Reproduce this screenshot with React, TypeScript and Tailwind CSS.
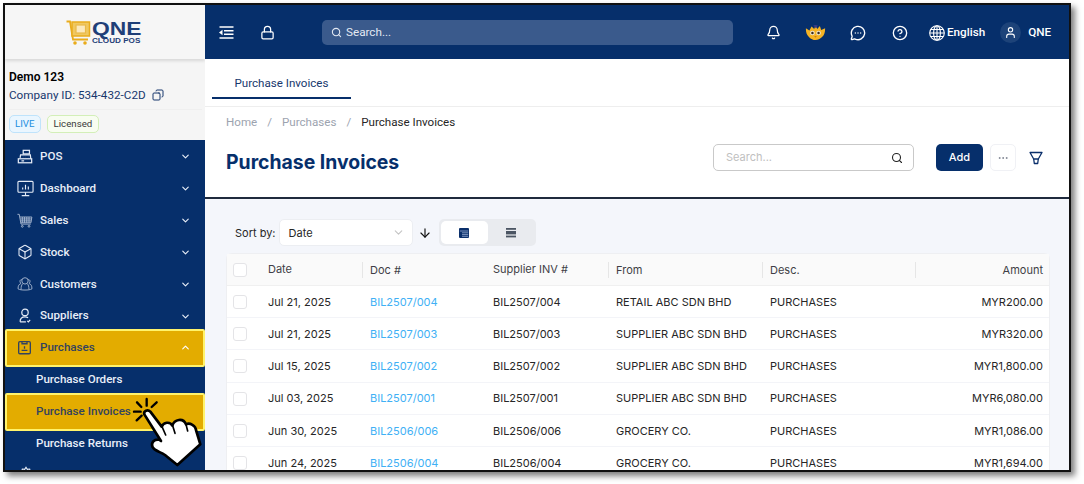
import React from "react";
import {
  Lock,
  Search,
  Bell,
  MessageCircleMore,
  CircleHelp,
  User,
  Copy,
  ChevronDown,
  ChevronUp,
  Box,
  ArrowDown,
  Ellipsis,
} from "lucide-react";

const PosIcon = () => (
  <svg width="16" height="16" viewBox="0 0 18 18" fill="none" stroke="currentColor" strokeWidth="1.4">
    <rect x="7" y="1.5" width="7" height="4" />
    <path d="M3.5 10 L4 6.5 H15 L15.5 11" />
    <rect x="1.5" y="11" width="15" height="4.5" />
    <path d="M5 13.3h3M7 9h.1M10 9h.1M13 9h.1" />
  </svg>
);

const DashIcon = () => (
  <svg width="17" height="17" viewBox="0 0 18 18" fill="none" stroke="currentColor" strokeWidth="1.2">
    <rect x="1" y="1.5" width="16" height="11.5" rx="1" />
    <path d="M9 13v3M5 16.5h8M6 10V8M9 10V5M12 10V7" />
  </svg>
);

const CartIcon = () => (
  <svg width="16" height="16" viewBox="0 0 18 18" fill="none" stroke="currentColor" strokeWidth="1" className="opacity-75">
    <path d="M0.5 1.5h2l2 11h11" />
    <path d="M3.2 4.5h13.5l-1 6.5H4.3" />
    <path d="M6 4.5v6.5M8.5 4.5v6.5M11 4.5v6.5M13.5 4.5v6.5M3.6 6.7h12.800M4 8.9h12" />
    <circle cx="6" cy="15" r="1" />
    <circle cx="13.5" cy="15" r="1" />
  </svg>
);

const UsersIcon = () => (
  <svg width="16" height="16" viewBox="0 0 18 18" fill="none" stroke="currentColor" strokeWidth="1" className="opacity-75">
    <circle cx="9" cy="5.5" r="3.6" />
    <path d="M5.6 4.2C3 3.6 2.600 7 4.600 8.400 2.400 9 1 11 1.200 14.500c2 1 4.500 1.300 7.800 1.300s5.800-.3 7.800-1.300C17 11 15.600 9 13.400 8.400c2-1.400 1.600-4.800-1-4.200" />
    <path d="M6.500 8.800C5 10 4.500 12 4.600 15.200M11.500 8.800c1.500 1.200 2 3.200 1.900 6.400" />
  </svg>
);

const SupplierIcon = () => (
  <svg width="16" height="16" viewBox="0 0 18 18" fill="none" stroke="currentColor" strokeWidth="1.4">
    <circle cx="9" cy="5" r="3.6" />
    <path d="M3.500 15.500c0-3.500 2-5.500 5.500-5.500 1.500 0 2.500.4 3.500 1M3.500 15.500h6.500M11.500 14.500l1.300 1.200 2-2.300" />
  </svg>
);

const PurchaseIcon = () => (
  <svg width="15" height="15" viewBox="0 0 18 18" fill="none" stroke="currentColor" strokeWidth="1.6">
    <rect x="2" y="2" width="14" height="14.500" rx="1.500" />
    <path d="M6 1.500v3h6v-3" />
    <path d="M5.500 12.500h7M9 7.500v3" />
  </svg>
);

const GearIcon = () => (
  <svg width="16" height="16" viewBox="0 0 24 24" fill="none" stroke="currentColor" strokeWidth="1.6">
    <circle cx="12" cy="12" r="3" />
    <path d="M12 2l2 3 3.500-.5.900 3.500L22 10l-2 2 2 2-3.600 2-.9 3.500-3.500-.5-2 3-2-3-3.500.5-.9-3.500L2 14l2-2-2-2 3.600-2 .9-3.500 3.500.5z" />
  </svg>
);

const MenuIcon = () => (
  <svg width="15" height="13" viewBox="0 0 15 13" fill="none" stroke="currentColor" strokeWidth="1.5" className="ml-[14px]">
    <path d="M0.500 1h14M5 4.700h9.500M5 8.300h9.500M0.500 12h14" />
    <path d="M3.500 3.800v5.400L0 6.500z" fill="currentColor" stroke="none" />
  </svg>
);

const GlobeIcon = () => (
  <svg width="16" height="16" viewBox="0 0 16 16" fill="none" stroke="currentColor" strokeWidth="1.1" className="ml-[21px]">
    <circle cx="8" cy="8" r="7.300" />
    <ellipse cx="8" cy="8" rx="3.400" ry="7.300" />
    <path d="M8 .7v14.600M.7 8h14.600M1.700 4.500h12.600M1.700 11.500h12.600" />
  </svg>
);

const CartLogo = () => (
  <svg width="25" height="26" viewBox="0 0 25 26" fill="none">
    <path d="M0.500 1.500h3.500l3 18h15" stroke="#e9ac1c" strokeWidth="1.800" />
    <rect x="6" y="2" width="17.500" height="14" fill="#f0c860" stroke="#e9ac1c" strokeWidth="1.500" />
    <rect x="10" y="5" width="9.500" height="8" fill="#fbe9bd" stroke="#e9b94a" strokeWidth="1.200" />
    <circle cx="9" cy="23" r="1.800" fill="#e9ac1c" />
    <circle cx="19" cy="23" r="1.800" fill="#e9ac1c" />
  </svg>
);

const Mascot = () => (
  <svg width="21" height="18" viewBox="0 0 24 20">
    <path d="M1 4.500l4 2.500L7.500 2.500 10.500 5.500 12 1.500 14 5.500 17 2 18.500 6.500 23 4.500c0 5-1 8-3.500 10S15 18 12 18s-5-1-7.500-3.500S1 9.500 1 4.500z" fill="#f5b324" />
    <path d="M9.500 1h5l-2 3.500z" fill="#3f3a8c" />
    <circle cx="8.500" cy="10" r="2.700" fill="#efe6cf" />
    <circle cx="15.500" cy="10" r="2.700" fill="#efe6cf" />
    <circle cx="8.500" cy="10" r="1.400" fill="#3b2a1a" />
    <circle cx="15.500" cy="10" r="1.400" fill="#3b2a1a" />
    <path d="M10.500 13.500h3l-1.500 2z" fill="#c97a14" />
  </svg>
);

const TableIcon = () => (
  <svg width="10" height="10" viewBox="0 0 10 10">
    <rect width="10" height="10" rx="1" fill="#0a2f6b" />
    <path d="M.8 3h8.400M3 4.800h6.200M3 6.600h6.200M3 8.300h6.200" stroke="#a9bce0" strokeWidth="0.700" />
  </svg>
);

const RowsIcon = () => (
  <svg width="10" height="10" viewBox="0 0 10 10" fill="#4b5563">
    <rect width="10" height="1.800" y="0" />
    <rect width="10" height="3.400" y="3" />
    <rect width="10" height="1.800" y="7.600" />
  </svg>
);

const FunnelIcon = () => (
  <svg width="14" height="14" viewBox="0 0 14 14" fill="none" stroke="#0a2f6b" strokeWidth="1.300" strokeLinejoin="round">
    <path d="M1 1.500h12L9.300 8H4.700z" />
    <path d="M4.700 8l.6 4.500h3.400L9.300 8" />
  </svg>
);

// coordinates follow a 3x crop of the hand
const HandCursor = () => (
  <svg width="85" height="75" viewBox="0 0 255 225" className="absolute left-[120px] top-[390px]">
    <g stroke="#000" strokeWidth="7" strokeLinecap="round">
      <path d="M65 12V32M95 22L80 36M36 22L49 36M27 50H47M35 76L50 62" />
    </g>
    <path
      d="M58 58C55 48 68 42 76 50L110 95C115 82 135 78 142 92C148 72 175 68 183 88C195 82 212 92 213 105L226 148L157 210L120 180C105 170 88 168 82 155C78 142 88 132 102 134L108 138Z"
      fill="#fff"
      stroke="#000"
      strokeWidth="8"
      strokeLinejoin="round"
    />
    <path d="M112 97L122 120M143 92L150 115M183 88L188 108" fill="none" stroke="#000" strokeWidth="5" strokeLinecap="round" />
  </svg>
);

const navItems = [
  { label: "POS", icon: <PosIcon /> },
  { label: "Dashboard", icon: <DashIcon /> },
  { label: "Sales", icon: <CartIcon /> },
  { label: "Stock", icon: <Box size={16} strokeWidth={1.6} /> },
  { label: "Customers", icon: <UsersIcon /> },
  { label: "Suppliers", icon: <SupplierIcon /> },
];

const rows = [
  ["Jul 21, 2025", "BIL2507/004", "BIL2507/004", "RETAIL ABC SDN BHD", "MYR200.00"],
  ["Jul 21, 2025", "BIL2507/003", "BIL2507/003", "SUPPLIER ABC SDN BHD", "MYR320.00"],
  ["Jul 15, 2025", "BIL2507/002", "BIL2507/002", "SUPPLIER ABC SDN BHD", "MYR1,800.00"],
  ["Jul 03, 2025", "BIL2507/001", "BIL2507/001", "SUPPLIER ABC SDN BHD", "MYR6,080.00"],
  ["Jun 30, 2025", "BIL2506/006", "BIL2506/006", "GROCERY CO.", "MYR1,086.00"],
  ["Jun 24, 2025", "BIL2506/004", "BIL2506/004", "GROCERY CO.", "MYR1,694.00"],
];

const Checkbox = () => <div className="w-[14px] h-[14px] rounded-[3px] border border-[#e4e4e7] bg-white" />;

const Highlight = () => (
  <div className="absolute inset-x-0 -inset-y-[3px] rounded-[2px] bg-[#e3ac00] border-[2.5px] border-[#fff36b]" />
);

const Sidebar = () => (
  <aside className="w-[200px] shrink-0 flex flex-col bg-[#f5f5f5] font-['Roboto',sans-serif]">
    <div className="h-[54px] shrink-0 flex items-center justify-center gap-[1px] pr-[2px] pt-[2px] bg-[#f6f6f6] shadow-[0_2px_3px_rgba(0,0,0,0.12)]">
      <CartLogo />
      <div className="w-[50px] flex flex-col font-['Liberation_Sans',sans-serif] text-[#1f3f78]">
        <span className="text-[18px] font-bold scale-x-[1.27] origin-left leading-[15px] h-[15px]">QNE</span>
        <span className="text-[6.5px] font-bold scale-x-[1.25] origin-left leading-[7px] h-[7px] whitespace-nowrap">CLOUD POS</span>
      </div>
    </div>
    <div className="h-[81px] shrink-0 pl-[4px] pr-[3px] pt-[10px]">
      <div className="text-[12px] font-semibold text-black leading-[16px]">Demo 123</div>
      <div className="mt-[1px] flex items-center gap-[6px] text-[11.7px] leading-[18px] text-[#17376d] pb-[5px] border-b border-[#efefef]">
        <span>Company ID: 534-432-C2D</span>
        <Copy size={12} className="-scale-x-100" />
      </div>
      <div className="mt-[5px] flex gap-[6px] text-[9.7px] leading-[16px]">
        <span className="px-[5px] rounded-[5px] border border-[#bfe3fb] bg-[#eaf6ff] text-[#1b8fe0]">LIVE</span>
        <span className="px-[6px] rounded-[5px] border border-[#d3efb8] bg-[#f8fdf1] text-[#3a3a3a]">Licensed</span>
      </div>
    </div>
    <nav className="flex-1 pt-[1px] bg-[#062f6b] text-[#e8eef8] text-[11.6px] font-medium overflow-hidden">
      {navItems.map((item) => (
        <div key={item.label} className="h-[31.85px] flex items-center pl-[12px] pr-[14px]">
          <span className="w-[23px] flex justify-start text-[#e4ebf6]">{item.icon}</span>
          <span className="flex-1">{item.label}</span>
          <ChevronDown size={11} strokeWidth={2.5} />
        </div>
      ))}
      <div className="relative h-[31.85px] flex items-center pl-[12px] pr-[14px] text-[#33435f]">
        <Highlight />
        <span className="relative w-[23px] flex justify-start"><PurchaseIcon /></span>
        <span className="relative flex-1">Purchases</span>
        <ChevronUp size={11} strokeWidth={2.5} className="relative text-white" />
      </div>
      <div className="h-[31.85px] flex items-center pl-[31px]">Purchase Orders</div>
      <div className="relative h-[31.85px] flex items-center pl-[31px] text-[#33435f]">
        <Highlight />
        <span className="relative">Purchase Invoices</span>
      </div>
      <div className="h-[31.85px] flex items-center pl-[31px]">Purchase Returns</div>
      <div className="h-[31.85px] pl-[13px] pt-[7px]"><GearIcon /></div>
    </nav>
  </aside>
);

const TopBar = () => (
  <header className="h-[54px] shrink-0 flex items-center pt-[1px] bg-[#062f6b] text-white font-['Roboto',sans-serif]">
    <MenuIcon />
    <Lock size={15} strokeWidth={2} className="ml-[26px]" />
    <div className="ml-[47px] w-[411px] h-[25px] rounded-[5px] bg-[#3a5a8c] flex items-center pl-[9px] gap-[4px] text-[11.7px] text-[#e3e9f3]">
      <Search size={11} strokeWidth={2.4} />
      <span>Search...</span>
    </div>
    <Bell size={15} className="ml-[33px]" />
    <span className="ml-[24px]"><Mascot /></span>
    <MessageCircleMore size={16} className="ml-[24px]" />
    <CircleHelp size={16} className="ml-[26px]" />
    <GlobeIcon />
    <span className="ml-[2px] text-[11.7px] font-medium">English</span>
    <span className="ml-[15px] w-[21px] h-[21px] rounded-full bg-[#1d4379] flex items-center justify-center">
      <User size={13} />
    </span>
    <span className="ml-[7px] text-[11.7px] font-medium">QNE</span>
  </header>
);

const InvoiceTable = () => (
  <div className="mt-[7px] ml-[21px] w-[824px] rounded-t-[6px] border border-b-0 border-[#eeeff2] bg-white text-[11px] text-[#262626]">
    <div className="grid grid-cols-[35px_102px_123px_123px_154px_153px_1fr] h-[32px] items-center bg-[#fafafa] border-b border-[#f0f0f0] text-[#3f3f46]">
      <div className="pl-[6px]"><Checkbox /></div>
      <div className="pl-[6px]">Date</div>
      <div className="-ml-[2px] pl-[7px] h-[16px] leading-[16px] border-l border-[#e6e6e6]">Doc #</div>
      <div className="pl-[6px]">Supplier INV #</div>
      <div className="-ml-[2px] pl-[7px] h-[16px] leading-[16px] border-l border-[#e6e6e6]">From</div>
      <div className="-ml-[2px] pl-[7px] h-[16px] leading-[16px] border-l border-[#e6e6e6]">Desc.</div>
      <div className="-ml-[2px] pr-[6px] text-right h-[16px] leading-[16px] border-l border-[#e6e6e6]">Amount</div>
    </div>
    {rows.map((row) => (
      <div key={row[1]} className="grid grid-cols-[35px_102px_123px_123px_154px_153px_1fr] h-[32.2px] pt-[1px] items-center border-b border-[#f3f4f8]">
        <div className="pl-[6px]"><Checkbox /></div>
        <div className="pl-[6px]">{row[0]}</div>
        <div className="pl-[6px] text-[#40b0f5]">{row[1]}</div>
        <div className="pl-[6px]">{row[2]}</div>
        <div className="pl-[6px]">{row[3]}</div>
        <div className="pl-[6px]">PURCHASES</div>
        <div className="pr-[6px] text-right">{row[4]}</div>
      </div>
    ))}
  </div>
);

const Main = () => (
  <main className="flex-1 min-w-0 flex flex-col bg-white font-['Inter',sans-serif]">
    <TopBar />
    <div className="h-[48px] shrink-0 pl-[7px] border-b border-[#eeeeee] font-['Roboto',sans-serif]">
      <div className="w-[139px] h-[40px] pt-[12px] flex items-center justify-center border-b-2 border-[#062f6b] text-[11.6px] text-[#17376d]">Purchase Invoices</div>
    </div>
    <div className="h-[92px] shrink-0 border-b-2 border-[#1f2a3d] px-[21px]">
      <div className="pt-[7px] flex items-center gap-[10px] text-[11.6px] leading-[16px] text-[#9ca3af] font-['Roboto',sans-serif]">
        <span>Home</span><span>/</span><span>Purchases</span><span>/</span><span className="text-[#262626]">Purchase Invoices</span>
      </div>
      <div className="mt-[14px] flex items-start">
        <h1 className="mt-[3px] text-[19.4px] leading-[30px] font-bold text-[#062f6b] flex-1">Purchase Invoices</h1>
        <div className="w-[201px] h-[27px] rounded-[5px] border border-[#c9c9c9] flex items-center pl-[12px] pr-[10px] text-[11px] text-[#c0c0c0] justify-between">
          <span>Search...</span>
          <Search size={12} strokeWidth={2.2} className="text-[#222]" />
        </div>
        <button className="ml-[22px] w-[47px] h-[27px] rounded-[5px] bg-[#062f6b] text-white text-[11px] font-medium">Add</button>
        <div className="ml-[7px] w-[26px] h-[27px] rounded-[5px] border border-[#f0f1f5] flex items-center justify-center text-[#6b7280]">
          <Ellipsis size={12} strokeWidth={1.5} />
        </div>
        <span className="ml-[13px] mr-[5px] mt-[7px]"><FunnelIcon /></span>
      </div>
    </div>
    <div className="flex-1 bg-[#f4f6fb] overflow-hidden">
      <div className="mt-[20px] ml-[30px] flex items-center text-[11px] text-[#262626]">
        <span className="pt-[1px]">Sort by:</span>
        <div className="ml-[3px] w-[134px] h-[27px] rounded-[5px] border border-[#eceef2] bg-white flex items-center justify-between pl-[9px] pr-[7px]">
          <span className="pt-[1px]">Date</span>
          <ChevronDown size={13} className="text-[#c4c4c4]" />
        </div>
        <ArrowDown size={14} className="ml-[5px] text-[#111]" />
        <div className="ml-[7px] w-[97px] h-[27px] rounded-[5px] bg-[#e9ebef] flex items-center p-[2px]">
          <div className="w-[47px] h-[23px] rounded-[5px] bg-white flex items-center justify-center"><TableIcon /></div>
          <div className="flex-1 flex items-center justify-center"><RowsIcon /></div>
        </div>
      </div>
      <InvoiceTable />
    </div>
  </main>
);

export default function App() {
  return (
    <div className="w-[1084px] h-[484px] bg-white overflow-hidden pl-[3px] pt-[3px]">
      <div className="relative w-[1068px] h-[469px] border-2 border-[#111] flex overflow-hidden shadow-[4px_4px_6px_rgba(0,0,0,0.5)] bg-white">
        <Sidebar />
        <Main />
        <HandCursor />
      </div>
    </div>
  );
}
